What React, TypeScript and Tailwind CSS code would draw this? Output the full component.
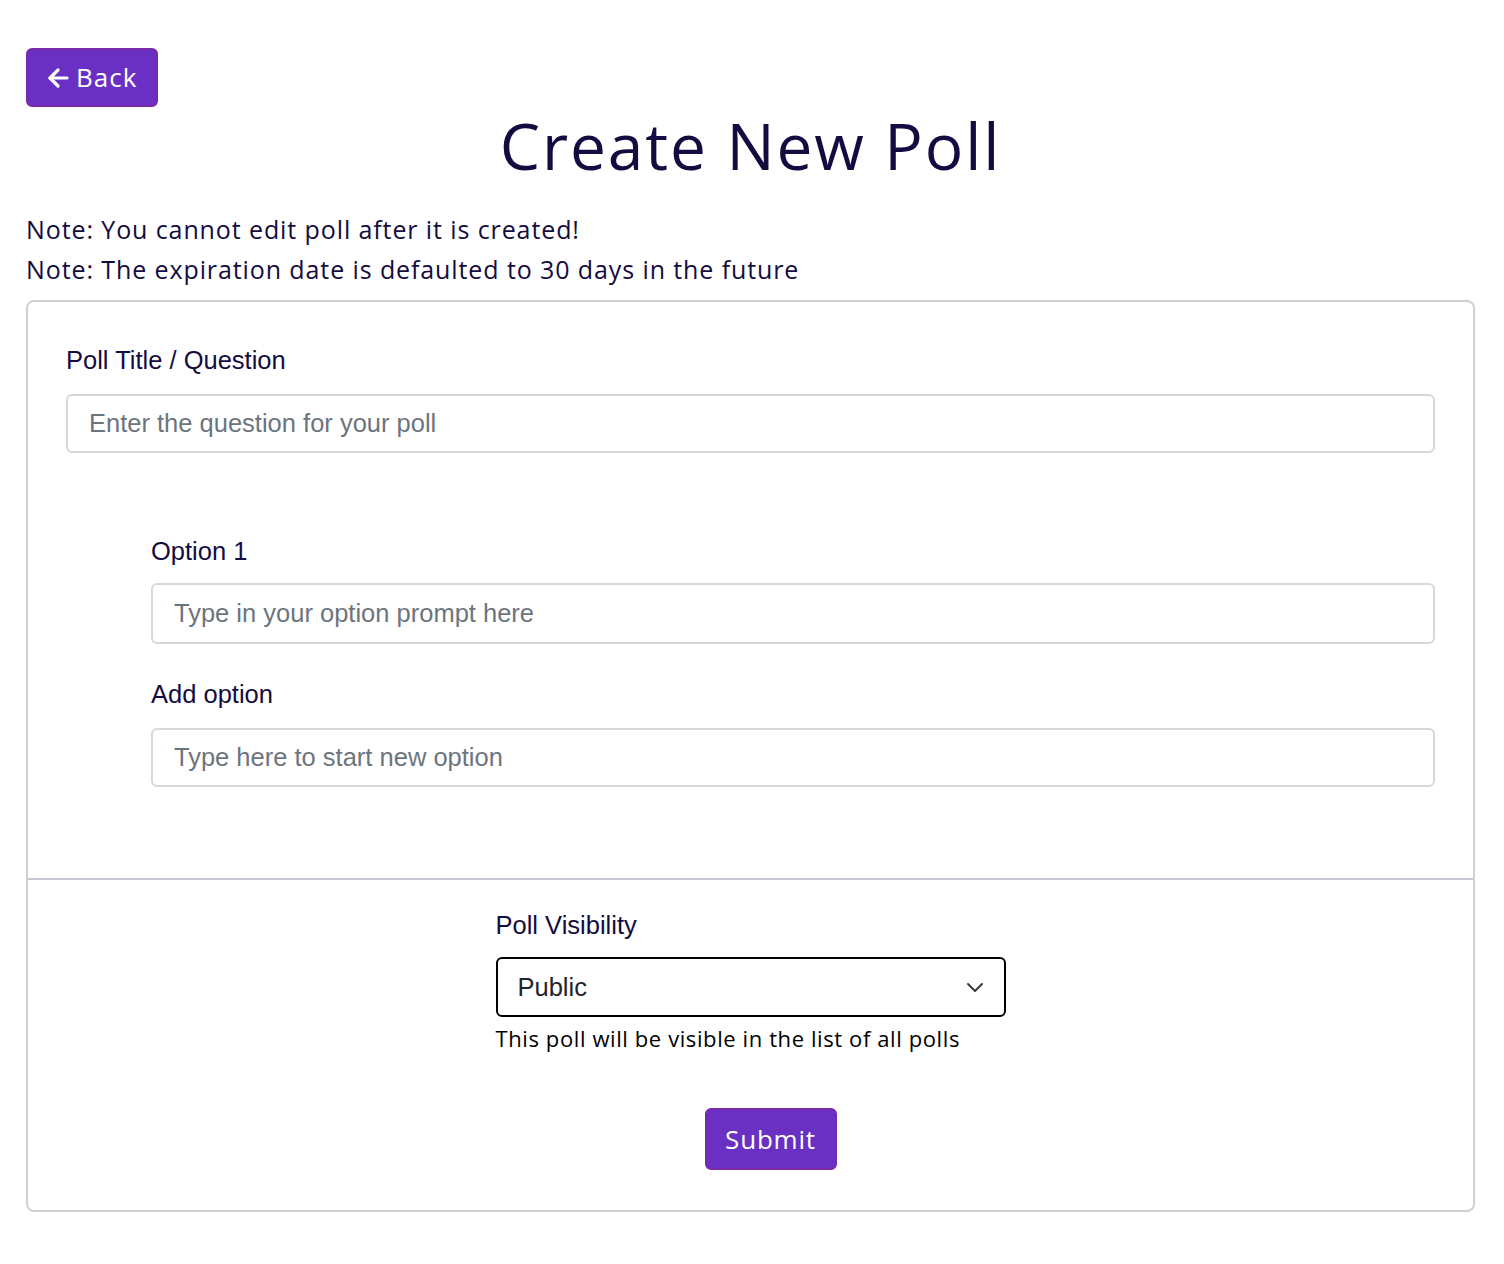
import React from 'react';

const geo = { fontFamily: '"Open Sans", "Noto Sans", sans-serif' };
const helv = { fontFamily: '"Liberation Sans", Arial, sans-serif' };

interface FieldProps {
  label: string;
  placeholder: string;
  tall?: boolean;
}

const Field = ({ label, placeholder, tall }: FieldProps) => (
  <div>
    <label className="block text-[25.5px] leading-[32px] text-[#140c40]" style={helv}>
      {label}
    </label>
    <input
      type="text"
      placeholder={placeholder}
      className={`block w-full px-[21px] rounded-md border-2 border-[#d5d8dc] bg-white text-[25.5px] text-[#212529] placeholder:text-[#6c757d] outline-none ${
        tall ? 'mt-[16px] h-[61px]' : 'mt-[18px] h-[59px]'
      }`}
      style={helv}
    />
  </div>
);

export default function App() {
  return (
    <div className="min-h-[1264px] bg-white pl-[26px] pr-[29px] pt-[48px] pb-[52px] text-[#140c40]" style={geo}>
      <button
        className="flex items-center gap-[7px] h-[59px] w-[132px] pl-[19px] rounded-md border-2 border-[#7a2aa8] bg-[#6930c3] text-white text-[26px] tracking-[1px]"
        style={geo}
      >
        <svg width="22" height="22" viewBox="0 0 22 22" fill="none" stroke="currentColor" strokeWidth="3.2" strokeLinecap="round" strokeLinejoin="round">
          <path d="M20 11H3" />
          <path d="M11 3L3 11l8 8" />
        </svg>
        <span>Back</span>
      </button>

      <h1 className="text-center text-[64px] leading-[82px] mt-[-2px] font-normal tracking-[1.9px]">Create New Poll</h1>

      <div className="mt-[22px] text-[25px] leading-[40px] tracking-[0.9px]">
        <p>Note: You cannot edit poll after it is created!</p>
        <p>Note: The expiration date is defaulted to 30 days in the future</p>
      </div>

      <div className="mt-[11px] rounded-lg border-2 border-[#d0d0d0]">
        <div className="px-[38px] pt-[42px] pb-[91px]">
          <Field label="Poll Title / Question" placeholder="Enter the question for your poll" />
          <div className="ml-[85px] mt-[82px] flex flex-col gap-[34px]">
            <Field label="Option 1" placeholder="Type in your option prompt here" tall />
            <Field label="Add option" placeholder="Type here to start new option" />
          </div>
        </div>

        <div className="h-[2px] bg-[#c8c5d9]" />

        <div className="flex justify-center pt-[29px] pb-[40px]">
          <div className="w-[510px]">
            <label className="block text-[25.5px] leading-[32px] text-[#140c40]" style={helv}>
              Poll Visibility
            </label>
            <div className="relative mt-[16px]">
              <select
                className="block w-full h-[60px] appearance-none rounded-md border-2 border-black bg-white pl-[20px] text-[25.5px] text-[#212529] outline-none"
                style={helv}
                defaultValue="public"
              >
                <option value="public">Public</option>
                <option value="private">Private</option>
              </select>
              <svg
                className="pointer-events-none absolute right-[22px] top-[24px]"
                width="18"
                height="12"
                viewBox="0 0 18 12"
                fill="none"
                stroke="#343a40"
                strokeWidth="2"
                strokeLinecap="round"
                strokeLinejoin="round"
              >
                <polyline points="2,3 9,10 16,3" />
              </svg>
            </div>
            <p className="mt-[3px] text-[22px] leading-[36px] text-black tracking-[0.6px]">
              This poll will be visible in the list of all polls
            </p>
            <button
              className="mt-[52px] ml-[209px] h-[62px] w-[132px] rounded-md border-2 border-[#7a2aa8] bg-[#6930c3] text-white text-[26px] tracking-[0.8px]"
              style={geo}
            >
              Submit
            </button>
          </div>
        </div>
      </div>
    </div>
  );
}
